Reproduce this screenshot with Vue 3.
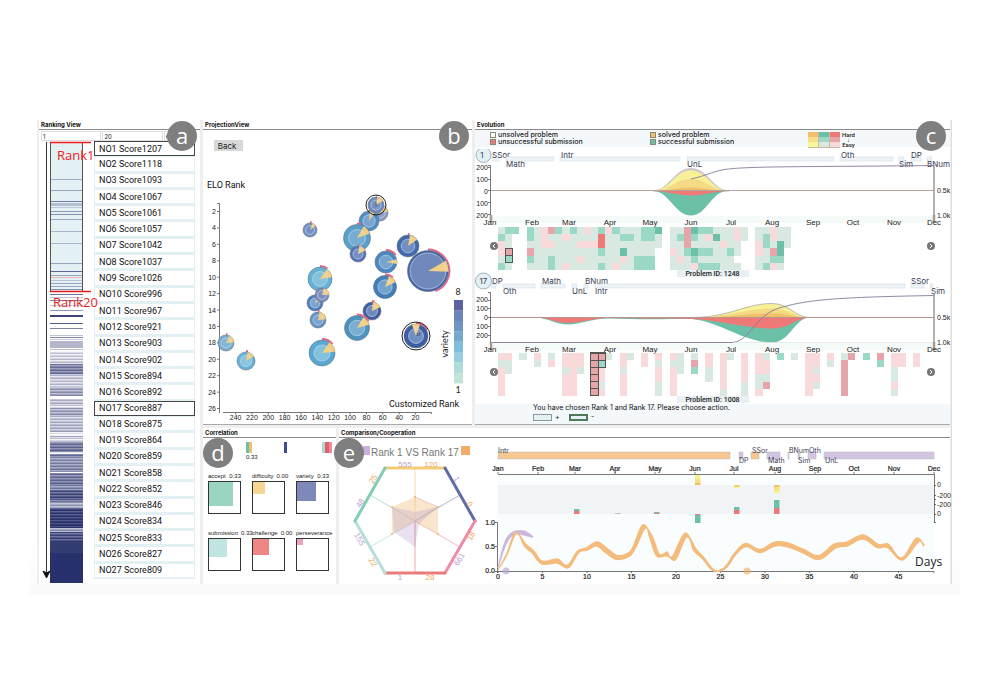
<script setup>
const scores = [1207, 1118, 1093, 1067, 1061, 1057, 1042, 1037, 1026, 996, 967, 921, 903, 902, 894, 892, 887, 875, 864, 859, 858, 852, 846, 834, 833, 827, 809]

// Score density strip: [y, height, opacity]
const stripes = [
  [179, 1, 0.35], [190, 1, 0.4], [201, 1, 0.6], [203, 3, 0.25], [207, 1, 0.2], [211, 1, 0.45], [214, 1, 0.5],
  [219, 1, 0.4], [231, 1, 0.3], [243, 1, 0.3], [263, 1, 0.4], [271, 1, 0.7], [275, 1, 0.4], [280, 1, 0.25],
  [283, 1, 0.4], [286, 1, 0.4], [289, 1, 0.5], [294, 1, 0.7], [297, 1, 0.3], [300, 1, 0.6], [305, 1, 0.25],
  [310, 1, 0.5], [315, 2, 0.9], [323, 1, 0.8], [328, 1, 0.6], [335, 1, 0.3], [337, 1, 0.6], [339, 1, 0.25],
  [341, 7, 0.35], [349, 1, 0.3]
]
const bands = [
  [351, 364, 0.2], [364, 374, 0.6], [374, 380, 0.3], [380, 387, 0.2], [387, 396, 0.42], [396, 399, 0],
  [399, 408, 0.25], [408, 415, 0.4], [415, 432, 0.3], [432, 436, 0.08], [436, 442, 0.25], [442, 452, 0.6],
  [452, 454, 0.05], [454, 472, 0.55], [472, 473, 0], [473, 490, 0.6], [490, 502, 0.75], [502, 508, 0.4],
  [508, 528, 0.92], [528, 532, 0.45], [532, 542, 0.85]
]
bands.forEach(([from, to, base], b) => {
  for (let y = from; y < to; y++) {
    const wave = (((y * 37 + b * 11) * 17) % 23) / 23 - 0.5
    stripes.push([y, 1, base ? Math.min(1, Math.max(0, base + wave * 0.4)) : 0])
  }
})
stripes.push([542, 11, 0.95], [553, 30, 1])

// Projection glyphs: ring and core colours, wedge angles and arc end in degrees
const glyphs = [
  { x: 310, y: 230, r: 7, ring: '#7590c4', core: '#7590c4', w: [20, 55], a: 12 },
  { x: 380, y: 213, r: 8, ring: '#8c9bcb', core: '#8c9bcb', w: [0, 80], a: 0 },
  { x: 369, y: 221, r: 10, ring: '#4f8dc5', core: '#7ba5d0', w: [5, 35], a: 20 },
  { x: 357, y: 238, r: 13.5, ring: '#5b9fcb', core: '#76aed3', w: [30, 70], a: 15 },
  { x: 376, y: 205, r: 8, ring: '#6f8ac0', core: '#7590c4', w: [10, 60], a: 5 },
  { x: 358, y: 254, r: 8, ring: '#5874b5', core: '#7590c4', w: [10, 65], a: 10 },
  { x: 408, y: 246, r: 11, ring: '#4468ae', core: '#6f8fc5', w: [10, 55], a: 8 },
  { x: 386, y: 262, r: 11, ring: '#4c88bf', core: '#74a5d1', w: [75, 100], a: 55 },
  { x: 428, y: 271, r: 20.5, ring: '#4562a5', core: '#7089bd', w: [60, 92], a: 160 },
  { x: 320, y: 279, r: 12, ring: '#65b2d7', core: '#84c1dd', w: [35, 82], a: 35 },
  { x: 315, y: 303, r: 8, ring: '#4f7eb8', core: '#7ba5d0', w: [20, 60], a: 0 },
  { x: 322, y: 295, r: 7, ring: '#7d8dc2', core: '#7d8dc2', w: [15, 88], a: 0 },
  { x: 318, y: 320, r: 8, ring: '#6793c4', core: '#7ba5d0', w: [10, 85], a: 10 },
  { x: 385, y: 287, r: 11.5, ring: '#427fb8', core: '#72a2cf', w: [20, 65], a: 40 },
  { x: 372, y: 311, r: 9, ring: '#3d5ca4', core: '#7089bd', w: [5, 65], a: 15 },
  { x: 357, y: 328, r: 12.5, ring: '#4d93c0', core: '#7baed2', w: [30, 75], a: 60 },
  { x: 322, y: 353, r: 13, ring: '#58a8d3', core: '#84c1dd', w: [35, 85], a: 50 },
  { x: 226, y: 343, r: 8, ring: '#79add1', core: '#84b6d6', w: [25, 85], a: 10 },
  { x: 246, y: 361, r: 9, ring: '#67b4da', core: '#8cc5df', w: [10, 60], a: 12 },
  { x: 416, y: 336, r: 12, ring: '#3c5ca5', core: '#6f8fc5', w: [-20, 20], a: 60 }
]
const polar = (g, r, deg) => {
  const t = ((deg - 90) * Math.PI) / 180
  return (g.x + r * Math.cos(t)).toFixed(2) + ' ' + (g.y + r * Math.sin(t)).toFixed(2)
}
const wedge = (g) => `M${g.x} ${g.y}L${polar(g, g.r, g.w[0])}A${g.r} ${g.r} 0 0 1 ${polar(g, g.r, g.w[1])}Z`
const arc = (g) => `M${polar(g, g.r + 1, 0)}A${g.r + 1} ${g.r + 1} 0 0 1 ${polar(g, g.r + 1, g.a)}`
const yTicks = Array.from({ length: 13 }, (_, i) => ({ v: 2 + i * 2, y: 211.5 + i * 16.42 }))
const xTicks = Array.from({ length: 12 }, (_, i) => ({ v: 240 - i * 20, x: 235.6 + i * 16.35 }))
const variety = ['#5b62a3', '#6a83b8', '#6f96c2', '#74a9cf', '#80bfdb', '#98cfdf', '#b0dbdd', '#c3e2d8']

const months = ['Jan', 'Feb', 'Mar', 'Apr', 'May', 'Jun', 'Jul', 'Aug', 'Sep', 'Oct', 'Nov', 'Dec']
const monthX = [490, 532, 569, 610, 650, 691, 731, 772, 813, 853, 894, 934]
const monthX2 = [498, 538, 575, 615, 655, 695, 734, 775, 815, 854, 894, 934]

const topics1 = [['SSor', 492, 0, 492, 499], ['Math', 506, 1, 506, 554], ['Intr', 561, 0, 560, 680], ['UnL', 687, 1, 687, 834], ['Oth', 841, 0, 840, 893], ['Sim', 899, 1, 899, 904], ['DP', 911, 0, 911, 921], ['BNum', 927, 1, 927, 932]]
const topics2 = [['DP', 492, 0, 492, 496], ['Oth', 503, 1, 503, 535], ['Math', 542, 0, 541, 565], ['UnL', 572, 1, 572, 577], ['BNum', 585, 0, 584, 588], ['Intr', 595, 1, 595, 905], ['SSor', 911, 0, 911, 924], ['Sim', 931, 1, 930, 933]]

// Submission grids, one letter per cell
const cellColor = { l: '#d8e9e2', g: '#9bd8c5', G: '#6cc0a7', p: '#f9dadb', P: '#e6a5a8', R: '#ee7976' }
const rows1 = [
  'lgg.glpPglglplgpglllggG.llPGgglllpl.llpll',
  'gl..glpllpllllRllgglggl.lgPglpGllpl.lgpll',
  'pl..llpplllpppRllllllll.llPllllpll..pglGl',
  'pP..PlllllllllgllGllll..plgGggllgl..plPG.',
  'lg..gllglllplllllplggg..lplglllll...llgg.',
  'gl..lllglpllllglpllggg..lllpggglll..lgpl.'
]
const cols2 = {
  0: 'plpppp', 1: 'pll', 3: 'l', 5: 'pl', 7: 'lp', 9: 'pplppp', 10: 'pppppp', 11: 'ppl', 13: 'PPPPPP', 14: 'Pgpplp',
  15: 'l', 17: 'pplppp', 18: 'l', 20: 'pp', 22: 'plppll', 24: 'plpppp', 25: 'lll', 27: 'lPg', 29: 'ppll',
  31: 'pppppl', 32: 'l', 34: 'ppppll', 36: 'pppllp', 37: 'lpplP', 39: 'g', 41: 'l', 43: 'pppppp', 44: 'pplpl',
  46: 'pl', 48: 'lPPPPP', 49: 'P', 51: 'g', 53: 'Pg', 55: 'ppllpl', 56: 'pp', 58: 'pp'
}
const cells1 = rows1.flatMap((row, y) => [...row].map((k, x) => ({ x, y, k }))).filter((c) => cellColor[c.k])
const cells2 = Object.entries(cols2).flatMap(([x, col]) => [...col].map((k, y) => ({ x: +x, y, k })))
const picked1 = [[1, 3], [1, 4]]
const picked2 = [[13, 0], [13, 1], [13, 2], [13, 3], [13, 4], [13, 5], [14, 0], [14, 1]]

const metrics = [
  { name: 'accept', value: '0.33', size: 77, color: '#9ad5c1' },
  { name: 'difficulty', value: '0.00', size: 40, color: '#f5d695' },
  { name: 'variety', value: '0.33', size: 62, color: '#7f89b9' },
  { name: 'submission', value: '0.33', size: 59, color: '#c1e5e3' },
  { name: 'challenge', value: '0.00', size: 50, color: '#ee8783' },
  { name: 'perseverance', value: '', size: 20, color: '#efa2bb' }
]

const hexEdges = [
  ['385 468', '445 468', '#f3cd76'], ['445 468', '475 521', '#606ca8'], ['475 521', '445 573', '#ef8aa8'],
  ['445 573', '385 573', '#ea7b79'], ['385 573', '355 521', '#b4dfdb'], ['355 521', '385 468', '#82cdb3']
]
const hexSpokes = [['415 468', '#f9dfb4'], ['460 495', '#c3c6de'], ['460 547', '#f6c8d3'], ['415 573', '#f4b9b9'], ['370 547', '#d5edea'], ['370 495', '#c4e6da']]
const hexLabels = [
  ['555', 405, 464, 0, 'p'], ['120', 431, 464, 0, 'o'], ['1', 457, 479, 60, 'p'], ['0', 470, 504, 60, 'o'],
  ['18', 471, 536, -60, 'o'], ['661', 459, 559, -60, 'p'], ['1', 400, 577, 0, 'p'], ['28', 430, 577, 0, 'o'],
  ['155', 360, 539, 60, 'p'], ['22', 373, 562, 60, 'o'], ['48', 360, 503, -60, 'p'], ['25', 373, 479, -60, 'o']
]

const plan = [
  ['Intr', 498, 0, 498, 730, 'o'], ['DP', 739, 1, 739, 743, 'p'], ['SSor', 752, 0, 751, 759, 'o'], ['Math', 768, 1, 767, 780, 'p'],
  ['BNum', 789, 0, 788, 789, 'p'], ['Sim', 798, 1, 798, 800, 'p'], ['Oth', 809, 0, 808, 816, 'p'], ['UnL', 825, 1, 824, 934, 'p']
]
const bars = [
  [695, 475, 4, '#f7f08f'], [695, 479, 4, '#f6df86'], [695, 483, 2, '#f2c069'], [695, 514, 1, '#ee7976'], [695, 515, 8, '#6cc0a7'],
  [574, 509, 2, '#6cc0a7'], [574, 511, 3, '#ee7976'], [615, 513, 1, '#c9b9b3'], [654, 512, 1, '#6cc0a7'], [654, 513, 1, '#ee7976'],
  [734, 485, 2, '#f4cf75'], [734, 487, 1, '#f7f08f'], [734, 507, 3, '#6cc0a7'], [734, 510, 4, '#ee7976'],
  [774, 485, 2, '#f2c069'], [774, 487, 3, '#f6df86'], [774, 490, 3, '#f7f08f'], [774, 500, 8, '#6cc0a7'], [774, 508, 6, '#ee7976']
]
const dayTicks = Array.from({ length: 10 }, (_, i) => ({ v: i * 5, x: 498 + i * 44.5 }))

// Ribbons: [x, y, half thickness]
const ribbonA = [
  [498, 570, 0.4], [507, 554, 0.8], [516, 533, 1.2], [525, 545, 1.5], [533, 552, 1.7], [542, 562.5, 1.8], [557, 561, 2.4],
  [568, 566.5, 1.7], [578, 552, 1.4], [587, 549, 1.7], [597, 544, 2.3], [607, 551, 2.3], [617, 557.5, 2.3], [628, 555, 2],
  [634, 548, 1.7], [644, 526.5, 2.4], [651, 537, 1.8], [658, 555, 2], [667, 554, 2.3], [674, 558, 2.5], [686, 535, 2.4],
  [695, 550, 1.7], [703, 558, 1.4], [712, 569, 1.2], [719, 571, 0.9], [727, 566, 1.2], [735, 554, 1.4], [746, 545, 2],
  [760, 551, 2], [775, 544, 2.3], [788, 545, 2.3], [803, 551, 2], [819, 557.5, 2.2], [835, 546, 2.3], [847, 544, 2.2],
  [863, 537, 2.4], [878, 546, 2.1], [888, 546, 2.1], [902, 559, 1.5], [917.5, 540, 2.4], [924, 546, 1.2]
]
const ribbonB = [[498, 568, 0.4], [504, 547, 1.1], [509, 537, 1.5], [516, 532.5, 1.7], [524, 533, 2.2], [533, 537, 0.8]]
const spline = (pts) => {
  let d = ''
  for (let i = 0; i < pts.length - 1; i++) {
    const a = pts[Math.max(0, i - 1)], b = pts[i], c = pts[i + 1], e = pts[Math.min(pts.length - 1, i + 2)]
    d += `C${b[0] + (c[0] - a[0]) / 6} ${b[1] + (c[1] - a[1]) / 6} ${c[0] - (e[0] - b[0]) / 6} ${c[1] - (e[1] - b[1]) / 6} ${c[0]} ${c[1]}`
  }
  return d
}
const ribbon = (pts) => {
  const side = (s) => pts.map((p, i) => {
    const a = pts[Math.max(0, i - 1)], b = pts[Math.min(pts.length - 1, i + 1)]
    const dx = b[0] - a[0], dy = b[1] - a[1], n = Math.hypot(dx, dy)
    return [p[0] - (s * p[2] * dy) / n, p[1] + (s * p[2] * dx) / n]
  })
  const up = side(-1.15), down = side(1.15).reverse()
  return `M${up[0][0]} ${up[0][1]}${spline(up)}L${down[0][0]} ${down[0][1]}${spline(down)}Z`
}
</script>

<template>
  <main class="figure">
    <div class="board">
      <section class="panel ranking">
        <h2>Ranking View</h2>
        <div class="fields">
          <input aria-label="First rank" value="1" />
          <input aria-label="Last rank" value="20" />
          <input aria-label="Step" value="6" />
        </div>
        <div class="rank-body">
          <svg class="strip" viewBox="39 141 55 443">
            <rect x="50" y="142" width="33" height="150" fill="#e4f1f4" />
            <rect v-for="(s, i) in stripes" :key="i" x="50" :y="s[0]" width="33" :height="s[1]" fill="#29316d" :opacity="s[2]" />
            <rect x="50" y="277" width="33" height="1" fill="#e9b3b3" />
            <path d="M50.5 142V292M82.5 142V292" stroke="#555" fill="none" />
            <path d="M46.5 142V576" stroke="#333" />
            <path d="M43 571L46.5 578L50 571L46.5 573Z" fill="#111" stroke="#111" />
            <path d="M50 142.5H91M50 291.5H91" stroke="#f01b1b" stroke-width="1.4" />
            <text class="note" x="57" y="160">Rank1</text>
            <text class="note" x="53" y="307">Rank20</text>
          </svg>
          <div class="list">
            <button v-for="(s, i) in scores" :key="i" :class="{ chosen: i === 0 || i === 16 }">NO{{ i + 1 }} Score{{ s }}</button>
          </div>
        </div>
        <span class="badge right">a</span>
      </section>

      <div class="views">
        <div class="row">
          <section class="panel projection">
            <h2>ProjectionView</h2>
            <div class="tools"><button class="back">Back</button></div>
            <svg viewBox="203 154 269 270">
              <text x="207" y="188" class="axis-title">ELO Rank</text>
              <text x="459" y="407" class="axis-title" text-anchor="end">Customized Rank</text>
              <path d="M217 203.5H219.5V413M223 412.5H431.5V414" class="axis" />
              <g v-for="t in yTicks" :key="t.v">
                <path :d="`M217 ${t.y}h2.5`" class="axis" />
                <text x="216" :y="t.y + 2.5" text-anchor="end" class="tick">{{ t.v }}</text>
              </g>
              <g v-for="t in xTicks" :key="t.v">
                <path :d="`M${t.x} 412.5v2`" class="axis" />
                <text :x="t.x" y="420" text-anchor="middle" class="tick">{{ t.v }}</text>
              </g>
              <g v-for="(g, i) in glyphs" :key="i">
                <path v-if="g.a" :d="arc(g)" fill="none" stroke="#e9668a" stroke-width="1.8" />
                <circle :cx="g.x" :cy="g.y" :r="g.r" :fill="g.ring" stroke="#66707c" stroke-width=".6" />
                <circle :cx="g.x" :cy="g.y" :r="g.r > 15 ? 18 : g.r * 0.62" :fill="g.core" />
                <path :d="wedge(g)" fill="#f3cf84" />
                <circle :cx="g.x" :cy="g.y" :r="g.r > 15 ? 18 : g.r * 0.62" fill="none" stroke="#cfe0ef" stroke-width=".6" />
              </g>
              <circle cx="376" cy="205" r="10" fill="none" stroke="#222" />
              <circle cx="416" cy="336" r="14" fill="none" stroke="#222" />
              <text x="375" y="206" class="micro">1</text>
              <text x="416" y="336" class="micro">17</text>
              <rect v-for="(c, i) in variety" :key="c" x="454" :y="300 + i * 10.4" width="9" height="10.6" :fill="c" />
              <text x="458" y="295" class="label-small" text-anchor="middle">8</text>
              <text x="458" y="393" class="label-small" text-anchor="middle">1</text>
              <text transform="translate(448 344) rotate(-90)" class="label-small" text-anchor="middle">variety</text>
            </svg>
            <span class="badge right">b</span>
          </section>

          <section class="panel evolution">
            <h2>Evolution</h2>
            <div class="legend">
              <ul>
                <li><i class="empty"></i>unsolved problem</li>
                <li><i class="red"></i>unsuccessful submission</li>
              </ul>
              <ul>
                <li><i class="orange"></i>solved problem</li>
                <li><i class="green"></i>successful submission</li>
              </ul>
              <div class="levels">
                <i v-for="c in ['#f2c069', '#6cc0a7', '#ee7976', '#f6df86', '#9bd8c5', '#e6a5a8', '#f7f79a', '#d8e9e2', '#f9dadb']" :key="c" :style="{ background: c }"></i>
              </div>
              <div class="scale"><span>Hard</span><span>↓</span><span>Easy</span></div>
            </div>

            <svg viewBox="475 148 475 79">
              <clipPath id="head"><rect x="475" y="149" width="30" height="20" /></clipPath>
              <rect x="490" y="216" width="445" height="7" fill="#f5fbf8" />
              <circle cx="483.500" cy="155" r="7.500" class="rank-dot" clip-path="url(#head)" />
              <text x="482" y="158" class="topic" text-anchor="middle">1</text>
              <g v-for="t in topics1" :key="t[0]">
                <rect :x="t[3]" y="157" :width="t[4] - t[3]" height="4" class="slot" />
                <text :x="t[1]" :y="t[2] ? 167 : 158" class="topic">{{ t[0] }}</text>
              </g>
              <path d="M653 191C669 191 674 168.500 691 168.500S713 191 729 191Z" fill="#d9cdd0" stroke="#a69c9c" stroke-width=".5" />
              <path d="M654 191C669 191 675 170.500 691 170.500S712 191 728 191Z" fill="#f7f298" />
              <path d="M655 191C669 191 675 179 691 179S712 191 727 191Z" fill="#f5da85" />
              <path d="M657 191C669 191 678 187.500 691 187.500S712 191 725 191Z" fill="#f0bf69" />
              <path d="M653 191C669 191 675 215.500 691 215.500S711 191 728 191Z" fill="#6cc0a7" />
              <path d="M653 191C667 191 677 195.500 691 195.500S714 191 728 191Z" fill="#ee7976" />
              <path d="M490 190.500H934" stroke="#b3a59c" />
              <path d="M691 179C705 176 712 172 722 170C742 166 800 167 934 165.500" class="total" />
              <path d="M488 165.500H490.500V215.500M488 167.500h2M488 179.500h2M488 190.500h2M488 202.500h2M488 214.500h2" class="axis" />
              <path d="M934 165V222" stroke="#999" stroke-width="1.500" />
              <path d="M491 215V222M934 215V222" stroke="#a49b88" stroke-width="2.500" />
              <text v-for="(v, i) in ['200', '100', '0', '100', '200']" :key="i" x="488" :y="170 + i * 12" text-anchor="end" class="tick">{{ v }}</text>
              <text x="937" y="193" class="tick">0.5k</text>
              <text x="937" y="218" class="tick">1.0k</text>
              <text v-for="(m, i) in months" :key="m" :x="monthX[i]" y="225" text-anchor="middle" class="month">{{ m }}</text>
            </svg>
            <div class="heat">
              <button aria-label="Earlier problems"><svg viewBox="0 0 8 8"><path d="M5 2L3 4L5 6" /></svg></button>
              <svg class="cells" viewBox="0 0 60 6" shape-rendering="crispEdges">
                <rect v-for="(c, i) in cells1" :key="i" :x="c.x" :y="c.y" width="1" height="1" :fill="cellColor[c.k]" />
                <rect v-for="(c, i) in picked1" :key="'p' + i" :x="c[0]" :y="c[1]" width="1" height="1" class="picked" />
              </svg>
              <button aria-label="Later problems"><svg viewBox="0 0 8 8"><path d="M3 2L5 4L3 6" /></svg></button>
            </div>
            <p class="problem"><span>Problem ID: 1248</span></p>

            <svg viewBox="475 277 475 76">
              <rect x="490" y="343" width="445" height="7" fill="#f5fbf8" />
              <circle cx="483.500" cy="281" r="8" class="rank-dot" />
              <text x="483.500" y="284" class="topic" text-anchor="middle">17</text>
              <g v-for="t in topics2" :key="t[0]">
                <rect :x="t[3]" y="284" :width="t[4] - t[3]" height="4" class="slot" />
                <text :x="t[1]" :y="t[2] ? 294 : 284" class="topic">{{ t[0] }}</text>
              </g>
              <path d="M691 317.500C730 317.500 745 303.500 772 303.500C790 303.500 795 317.500 809 317.500Z" fill="#f7f298" stroke="#a69c9c" stroke-width=".7" />
              <path d="M691 317.500C730 317.500 745 308.500 772 308.500C788 308.500 795 317.500 808 317.500Z" fill="#f5da85" />
              <path d="M700 317.500C730 317.500 745 313.500 772 313.500C788 313.500 795 317.500 806 317.500Z" fill="#f0bf69" />
              <path d="M537 317.500C550 319 556 324.500 568 324.500C582 324.500 592 318 610 318.500C640 320 670 318.500 692 319C720 322 745 342.500 772 342.500C790 342.500 794 319 809 317.500Z" fill="#6cc0a7" />
              <path d="M537 317.500C550 318 556 323 568 323C582 323 592 318 610 318C640 319 670 318.500 692 319C720 320 745 328.500 772 328.500C790 328.500 794 319 809 317.500Z" fill="#ee7976" />
              <path d="M490 317.500H934" stroke="#b9948c" />
              <path d="M490 342.500H733C752 340 755 312 785 306.500C810 299 850 297 934 295.500" class="total" />
              <path d="M733 342.500H934" stroke="#d8dedb" stroke-width=".6" />
              <path d="M488 292.500H490.500V342.500M488 300.500h2M488 308.500h2M488 317.500h2M488 326.500h2M488 335.500h2" class="axis" />
              <path d="M934 293V350" stroke="#999" stroke-width="1.500" />
              <path d="M491 342V350M934 342V350" stroke="#a49b88" stroke-width="2.500" />
              <text v-for="(v, i) in ['200', '100', '0', '100', '200']" :key="i" x="488" :y="302 + i * 9" text-anchor="end" class="tick">{{ v }}</text>
              <text x="937" y="320" class="tick">0.5k</text>
              <text x="937" y="345" class="tick">1.0k</text>
              <text v-for="(m, i) in months" :key="m" :x="monthX[i]" y="352" text-anchor="middle" class="month">{{ m }}</text>
            </svg>
            <div class="heat">
              <button aria-label="Earlier problems"><svg viewBox="0 0 8 8"><path d="M5 2L3 4L5 6" /></svg></button>
              <svg class="cells" viewBox="0 0 60 6" shape-rendering="crispEdges">
                <rect v-for="(c, i) in cells2" :key="i" :x="c.x" :y="c.y" width="1" height="1" :fill="cellColor[c.k]" />
                <rect v-for="(c, i) in picked2" :key="'p' + i" :x="c[0]" :y="c[1]" width="1" height="1" class="picked" />
              </svg>
              <button aria-label="Later problems"><svg viewBox="0 0 8 8"><path d="M3 2L5 4L3 6" /></svg></button>
            </div>
            <p class="problem"><span>Problem ID: 1008</span></p>
            <div class="action">
              <p>You have chosen Rank 1 and Rank 17. Please choose action.</p>
              <div class="choices">
                <button id="plus" aria-labelledby="plus-label"></button><label id="plus-label" for="plus">+</label>
                <button id="minus" class="strong" aria-labelledby="minus-label"></button><label id="minus-label" for="minus">-</label>
              </div>
            </div>
            <span class="badge right">c</span>
          </section>
        </div>

        <div class="row">
          <section class="panel correlation">
            <h2>Correlation</h2>
            <div class="groups">
              <figure><div><i class="g1"></i><i class="g2"></i></div><figcaption>0.33</figcaption></figure>
              <figure><div><i class="g3"></i></div></figure>
              <figure><div><i class="g4"></i><i class="g5"></i><i class="g6"></i></div></figure>
            </div>
            <div class="metrics">
              <div v-for="m in metrics" :key="m.name" class="metric">
                <p><span>{{ m.name }}</span><span>{{ m.value }}</span></p>
                <div class="box"><div :style="{ width: m.size + '%', height: m.size + '%', background: m.color }"></div></div>
              </div>
            </div>
            <span class="badge left">d</span>
          </section>

          <section class="panel comparison">
            <h2>Comparison/Cooperation</h2>
            <svg viewBox="339 438 611 146">
              <rect x="363" y="446" width="7" height="9" fill="#c9b1dc" />
              <rect x="461" y="446" width="9" height="9" fill="#f2ae68" />
              <text x="371" y="456" class="versus">Rank 1 VS Rank 17</text>
              <path v-for="s in hexSpokes" :key="s[0]" :d="`M415 521L${s[0]}`" :stroke="s[1]" stroke-width="1.200" />
              <path d="M415 497L438 507L438 534L415 522L392 534L392 507Z" fill="#f5c88f" fill-opacity=".45" />
              <path d="M415 512L438 507L419 524L415 547L394 532L392 507Z" fill="#b79ccb" fill-opacity=".3" />
              <path d="M415 497L438 507L415 521M415 521V547" stroke="#c9a9b4" stroke-width=".5" fill="none" />
              <g fill="#efb36e"><circle v-for="p in [[415, 497], [438, 507], [438, 534], [392, 534], [392, 507]]" :key="p.join()" :cx="p[0]" :cy="p[1]" r="1" /></g>
              <path v-for="e in hexEdges" :key="e[2]" :d="`M${e[0]}L${e[1]}`" :stroke="e[2]" stroke-width="3" stroke-linecap="round" />
              <text v-for="(l, i) in hexLabels" :key="'h' + i" :transform="`translate(${l[1]} ${l[2]}) rotate(${l[3]})`" y="3" text-anchor="middle" :class="['hex', l[4]]">{{ l[0] }}</text>

              <rect x="498" y="475" width="436" height="96" fill="#fafdfd" />
              <rect x="498" y="485" width="436" height="29" fill="#f1f4f6" />
              <g v-for="t in plan" :key="t[0]">
                <rect :x="t[3]" y="452" :width="t[4] - t[3]" height="7" :fill="t[5] === 'o' ? '#f7c792' : '#d4c4e3'" stroke="#bbb" stroke-width=".5" />
                <text :x="t[1]" :y="t[2] ? 463 : 453" class="plan">{{ t[0] }}</text>
              </g>
              <text v-for="(m, i) in months" :key="m" :x="monthX2[i]" y="471" text-anchor="middle" class="tick bold">{{ m }}</text>
              <path d="M498 474.500H934.500V522.500M934 485.500h2M934 495.500h2M934 499.500h2M934 504.500h2M934 514.500h2M934 522.500h2" class="axis" />
              <path v-for="(x, i) in monthX2" :key="'t' + i" :d="`M${x} 472v2`" class="axis" />
              <rect v-for="(b, i) in bars" :key="'b' + i" :x="b[0]" :y="b[1]" width="5.500" :height="b[2]" :fill="b[3]" />
              <text x="937" y="487" class="tick">0</text>
              <text x="937" y="498" class="tick">-200</text>
              <text x="937" y="507" class="tick">-200</text>
              <text x="937" y="516" class="tick">0</text>
              <path d="M495 522.500H497.500V573M495 546.500h2M495 571.500H934V573" class="axis" />
              <text v-for="(v, i) in ['1.0', '0.5', '0.0']" :key="v" x="495" :y="525 + i * 24" text-anchor="end" class="tick bold">{{ v }}</text>
              <g v-for="t in dayTicks" :key="t.v">
                <path :d="`M${t.x} 571v2`" class="axis" />
                <text :x="t.x" y="579" text-anchor="middle" class="tick bold">{{ t.v }}</text>
              </g>
              <path :d="ribbon(ribbonB)" fill="#ccb6de" />
              <path :d="ribbon(ribbonA)" fill="#f3bb7c" />
              <circle cx="506" cy="571" r="3.500" fill="#b79ccb" fill-opacity=".6" />
              <circle cx="747" cy="571" r="3.500" fill="#efa95c" fill-opacity=".6" />
              <text x="915" y="566" class="days">Days</text>
            </svg>
            <span class="badge left">e</span>
          </section>
        </div>
      </div>
    </div>
  </main>
</template>

<style>
body {
  margin: 0;
  background: #fff;
}
</style>

<style scoped>
* {
  box-sizing: border-box;
}
.figure {
  margin: 120px 40px 0 30px;
  padding: 0 10px 11px 7px;
  background: linear-gradient(#fff 90%, #fafafa);
  font-family: Roboto, "Liberation Sans", sans-serif;
  color: #222;
}
.board {
  display: flex;
  gap: 3px;
  background: #efefef;
  padding: 0 1px 0 2px;
  border-right: 1px solid #ddd;
  margin-right: -2px;
}
.views {
  flex: 747 1 0;
  min-width: 0;
  display: flex;
  flex-direction: column;
  gap: 3px;
}
.row {
  display: flex;
  gap: 3px;
}
.panel {
  position: relative;
  background: #fff;
  min-width: 0;
  flex-basis: 0;
}
.ranking { flex-grow: 161; display: flex; flex-direction: column; }
.projection { flex-grow: 269; border-bottom: 1px solid #aaa; }
.evolution { flex-grow: 475; border-bottom: 1px solid #aaa; }
.correlation { flex-grow: 133; }
.comparison { flex-grow: 611; }
svg {
  display: block;
  width: 100%;
  overflow: visible;
}
h2 {
  margin: 0;
  height: 10px;
  padding-left: 2px;
  border-bottom: 1px solid #8a8a8a;
  font: 700 6px/9px Inter, sans-serif;
  color: #111;
}
ul, p, figure {
  margin: 0;
  padding: 0;
}
button {
  padding: 0;
  margin: 0;
  font-family: inherit;
  color: inherit;
}
.badge {
  position: absolute;
  z-index: 2;
  top: 1px;
  width: 30px;
  height: 30px;
  border-radius: 50%;
  background: #7f7f7f;
  color: #fff;
  font: 22px/28px "Open Sans", sans-serif;
  text-align: center;
}
.badge.right { right: 3px; }
.badge.left { left: 0; top: 10px; }
.evolution .badge { right: 4px; }
.comparison .badge { left: -5px; }

.fields {
  display: flex;
  gap: 1px;
  padding: 1px 4px 0 2px;
  height: 11px;
}
.fields input {
  flex: 2 1 0;
  min-width: 0;
  height: 10px;
  padding: 0 1px;
  border: 1px solid #ddd;
  font: 6px/8px Inter, sans-serif;
  color: #222;
}
.fields input:last-child { flex-grow: 1; }
.rank-body {
  display: flex;
  padding-right: 5px;
}
.strip {
  flex: 55 1 0;
  min-width: 0;
  position: relative;
  z-index: 1;
  pointer-events: none;
}
.list {
  flex: 101 1 0;
  min-width: 0;
  display: flex;
  flex-direction: column;
  padding-bottom: 5px;
}
.list button {
  flex: 1 1 0;
  min-height: 0;
  padding-left: 4px;
  border: 1px solid #e3f1f5;
  border-bottom-width: 2px;
  background: #fff;
  text-align: left;
  font: 9px/12px Roboto, sans-serif;
  color: #111;
}
.list button.chosen { border: 1px solid #444; }
.note { font: 13px "Open Sans", sans-serif; fill: #f01b1b; }

.tools { padding: 10px 11px 3px; height: 24px; }
.back {
  display: block;
  width: 29px;
  height: 11px;
  padding-right: 3px;
  border: 0;
  background: #d8d8d8;
  font: 8px/10px Inter, sans-serif;
}
.axis-title { font: 9px Roboto, sans-serif; fill: #111; }
.axis { stroke: #555; stroke-width: .8; fill: none; }
.tick { font: 7px "Liberation Sans", sans-serif; fill: #222; }
.tick.bold { stroke: #222; stroke-width: .2; }
.micro { font: 4px "Liberation Sans", sans-serif; fill: #111; }
.label-small { font: 9px Lato, sans-serif; fill: #222; }

.legend {
  display: flex;
  height: 18px;
  padding-left: 15px;
  border-bottom: 1px solid #fff;
  background: #f4f8fb;
}
.legend ul {
  width: 160px;
  list-style: none;
  padding-top: 1px;
}
.legend li {
  display: flex;
  align-items: center;
  gap: 2px;
  height: 7px;
  font: 500 7px/7px Inter, sans-serif;
  white-space: nowrap;
}
.legend li i { width: 6px; height: 6px; border: 1px solid #887; }
.empty { background: #fff; }
.red { background: #ee7976; }
.orange { background: #f2c069; }
.green { background: #6cc0a7; }
.levels {
  display: grid;
  grid-template-columns: repeat(3, 10px);
  grid-template-rows: repeat(3, 5px);
  margin: 2px 0 0 -2px;
  padding: 0 0 1px;
  gap: 0 1px;
  width: 32px;
  height: 16px;
  background: #c9b9a0;
}
.scale {
  display: flex;
  flex-direction: column;
  align-items: center;
  margin-left: 2px;
  padding-top: 2px;
  font: 500 6px/5px Roboto, sans-serif;
}
.rank-dot { fill: #e3f0f4; stroke: #8aa0aa; stroke-width: .8; }
.slot { fill: #edf3f6; stroke: #d3dfe6; stroke-width: .6; }
.topic { font: 8px Inter, sans-serif; fill: #3b3b55; }
.month { font: 8px "Liberation Sans", sans-serif; fill: #222; }
.total { fill: none; stroke: #86789a; stroke-width: .9; }
.heat {
  display: flex;
  align-items: flex-start;
  padding: 0 15px;
  height: 43px;
}
.heat button {
  width: 8px;
  height: 8px;
  margin-top: 15px;
  border: 0;
  border-radius: 50%;
  background: #777;
}
.heat button path { fill: none; stroke: #fff; }
.cells { flex: 1 1 0; min-width: 0; }
.picked { fill: none; stroke: #555; stroke-width: .14; }
.problem {
  height: 7px;
  display: flex;
  justify-content: center;
}
.problem span {
  width: 72px;
  background: #e9f0f4;
  text-align: center;
  font: 500 7px/8px Roboto, sans-serif;
  white-space: nowrap;
}
.action {
  height: 20px;
  margin-top: 1px;
  padding-left: 58px;
  background: #f4f8fb;
  font: 7px/8px Inter, sans-serif;
  color: #111;
}
.choices {
  display: flex;
  align-items: center;
  gap: 3px;
  margin-top: 1px;
}
.choices button {
  width: 19px;
  height: 7px;
  border: 1px solid #8b9a9f;
  background: #e3f0f4;
}
.choices label { width: 11px; }
.choices .strong { border: 2px solid #4f7a5a; }

.groups {
  display: flex;
  height: 34px;
  padding: 4px 4px 0 43px;
  justify-content: space-between;
}
.groups div { display: flex; height: 11px; }
.groups i { display: block; width: 3px; }
.groups figcaption { font: 6px/9px "Liberation Sans", sans-serif; }
.groups figure { width: 10px; }
.g1 { background: #6cc0a7; }
.g2 { background: #f2c069; }
.g3 { background: #3f4a96; }
.g4 { background: #a5dad6; }
.groups .g5 { width: 4px; background: #e8605d; }
.g6 { background: #ee8aa8; }
.metrics {
  display: grid;
  grid-template-columns: repeat(3, 33px);
  gap: 15px 11px;
  padding-left: 5px;
}
.metric p {
  display: flex;
  justify-content: space-between;
  gap: 3px;
  height: 9px;
  font: 6px/8px "Liberation Sans", sans-serif;
  white-space: nowrap;
}
.box {
  height: 33px;
  border: 1px solid #333;
}
.versus { font: 10px "Liberation Sans", sans-serif; fill: #777; }
.hex { font: 8px "Liberation Sans", sans-serif; }
.hex.p { fill: #bda2d2; }
.hex.o { fill: #efa65a; }
.plan { font: 7px Inter, sans-serif; fill: #3b3b55; }
.days { font: 12px "Open Sans", sans-serif; fill: #222; }
</style>
